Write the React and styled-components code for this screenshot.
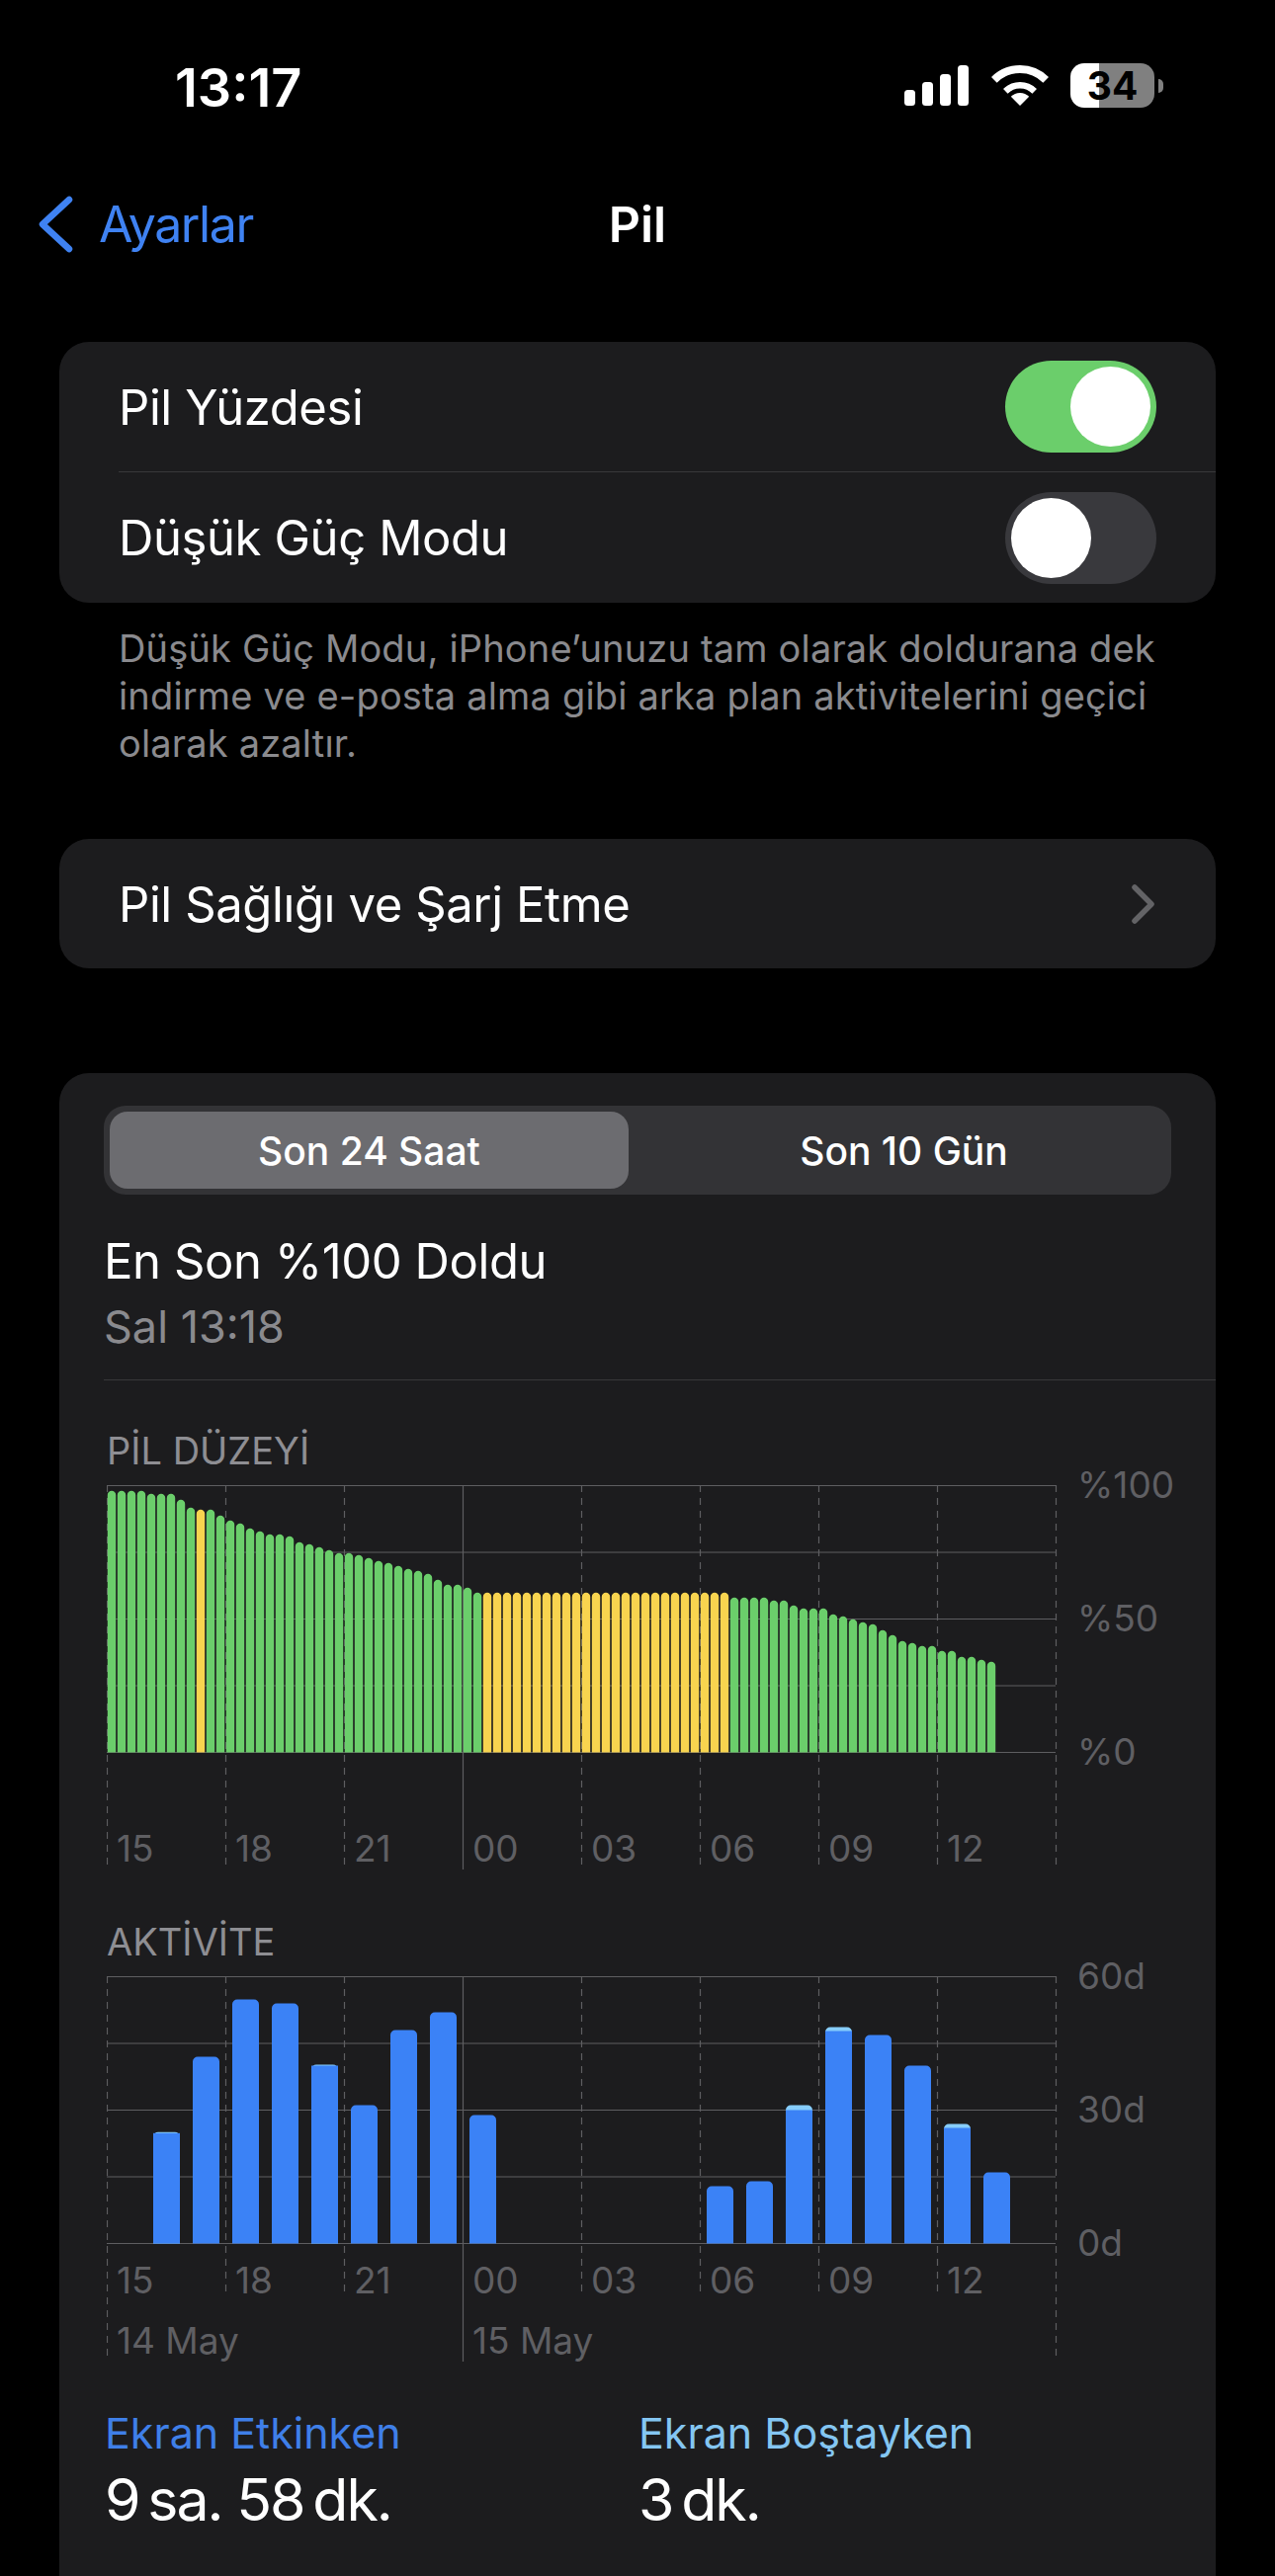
import React from 'react';
import styled, { createGlobalStyle } from 'styled-components';

const GlobalStyle = createGlobalStyle`
  html, body {
    margin: 0;
    padding: 0;
    background: #000;
  }
  body {
    width: 1290px;
    height: 2607px;
    overflow: hidden;
    font-family: Inter, "Liberation Sans", sans-serif;
    color: #fff;
  }
`;

const GRID = '#5e5e61';
const GREEN = '#6bce6b';
const YELLOW = '#f8d44f';
const BLUE = '#3b82f6';
const SKY = '#86cdfb';

// heights in px above the 0 line, one bar every 10px
const levelBars = [
  264.7, 264.7, 264.7, 264.7, 261.7, 261.7, 261.7, 255.7, 247.7, 245.7, 245.7, 239.7, 234.7, 231.7, 226.7, 223.7,
  220.7, 220.7, 218.7, 212.7, 210.7, 207.7, 204.7, 201.7, 201.7, 199.7, 196.7, 193.7, 191.7, 188.7, 185.7, 183.7,
  180.7, 174.7, 169.7, 169.7, 166.7, 161.7, ...Array(25).fill(161.7), 156.7, 156.7, 156.7, 156.7, 153.7, 153.7,
  148.7, 145.7, 145.7, 145.7, 139.7, 137.7, 134.7, 131.7, 129.7, 123.7, 118.7, 112.7, 110.7, 107.7, 107.7, 102.7,
  102.7, 96.7, 96.7, 93.7, 91.7,
];

const isCharging = (i) => i === 9 || (i >= 38 && i <= 62);

// slot is the hour index (24 slots of 40px), idle is the light cap on top
const activityBars = [
  { slot: 1, h: 112.7, idle: 1 },
  { slot: 2, h: 189, idle: 0 },
  { slot: 3, h: 247, idle: 0 },
  { slot: 4, h: 243, idle: 0 },
  { slot: 5, h: 181, idle: 1 },
  { slot: 6, h: 140, idle: 0 },
  { slot: 7, h: 216, idle: 0 },
  { slot: 8, h: 234, idle: 0 },
  { slot: 9, h: 130, idle: 0 },
  { slot: 15, h: 58, idle: 0 },
  { slot: 16, h: 63, idle: 0 },
  { slot: 17, h: 140, idle: 5 },
  { slot: 18, h: 219, idle: 4 },
  { slot: 19, h: 211, idle: 0 },
  { slot: 20, h: 180, idle: 0 },
  { slot: 21, h: 121, idle: 4 },
  { slot: 22, h: 72, idle: 0 },
];

const hours = ['15', '18', '21', '00', '03', '06', '09', '12'];

const topRounded = (x, h, w, r, bottom = 270.5) => {
  const top = bottom - h;
  return `M${x} ${bottom}V${top + r}A${r} ${r} 0 0 1 ${x + r} ${top}H${x + w - r}A${r} ${r} 0 0 1 ${x + w} ${top + r}V${bottom}Z`;
};

function ChartGrid({ dashEnd, edgeEnd, solidEnd }) {
  const dashed = [120, 240, 480, 600, 720, 840];
  return (
    <g stroke={GRID} strokeWidth="1.2" fill="none">
      {[0, 67.5, 135, 202.5, 270].map((y) => (
        <line key={y} x1="0" x2="960" y1={y + 0.5} y2={y + 0.5} />
      ))}
      {dashed.map((x) => (
        <line key={x} x1={x + 0.5} x2={x + 0.5} y1="0" y2={dashEnd} strokeDasharray="7 6" />
      ))}
      {[0, 960].map((x) => (
        <line key={x} x1={x + 0.5} x2={x + 0.5} y1="0" y2={edgeEnd} strokeDasharray="7 6" />
      ))}
      <line x1="360.5" x2="360.5" y1="0" y2={solidEnd} />
    </g>
  );
}

function LevelChart() {
  return (
    <ChartSvg width="962" height="392" viewBox="0 0 962 392">
      <ChartGrid dashEnd={384} edgeEnd={384} solidEnd={389} />
      {levelBars.map((h, i) => (
        <path key={i} d={topRounded(0.8 + 10 * i, h, 8.4, 4.2)} fill={isCharging(i) ? YELLOW : GREEN} />
      ))}
    </ChartSvg>
  );
}

function ActivityChart() {
  return (
    <ChartSvg width="962" height="392" viewBox="0 0 962 392">
      <ChartGrid dashEnd={324} edgeEnd={384} solidEnd={390} />
      {activityBars.map(({ slot, h, idle }) => {
        const x = 7 + 40 * slot;
        return (
          <g key={slot}>
            <path d={topRounded(x, h, 27, 5)} fill={idle ? SKY : BLUE} />
            {idle > 0 && <rect x={x} y={270.5 - h + idle} width="27" height={h - idle} fill={BLUE} />}
          </g>
        );
      })}
    </ChartSvg>
  );
}

function SignalIcon() {
  return (
    <svg width="66" height="41" viewBox="0 0 66 41" fill="#fff">
      <rect x="0" y="25" width="11" height="16" rx="3.5" />
      <rect x="18" y="17" width="11" height="24" rx="3.5" />
      <rect x="36" y="9" width="11" height="32" rx="3.5" />
      <rect x="54" y="0" width="11" height="41" rx="3.5" />
    </svg>
  );
}

function WifiIcon() {
  return (
    <svg width="58" height="41" viewBox="0 0 58 41" fill="none">
      <path d="M29 41L19.8 31.8A13 13 0 0 1 38.2 31.8Z" fill="#fff" />
      <path d="M14.33 26.33A20.75 20.75 0 0 1 43.67 26.33" stroke="#fff" strokeWidth="6.5" />
      <path d="M2.84 14.84A37 37 0 0 1 55.16 14.84" stroke="#fff" strokeWidth="8" />
    </svg>
  );
}

function Chevron({ color, width, height, weight, points }) {
  return (
    <svg width={width} height={height} viewBox={`0 0 ${width} ${height}`} fill="none">
      <polyline points={points} stroke={color} strokeWidth={weight} strokeLinecap="round" strokeLinejoin="round" />
    </svg>
  );
}

export default function App() {
  return (
    <Page>
      <GlobalStyle />
      <StatusBar>
        <Clock>13:17</Clock>
        <StatusIcons>
          <SignalIcon />
          <WifiIcon />
          <Battery>
            <BatteryBody>34</BatteryBody>
            <BatteryCap />
          </Battery>
        </StatusIcons>
      </StatusBar>

      <NavBar>
        <BackLink>
          <Chevron color="#3f82f2" width={36} height={58} weight={6.5} points="32,4 5,29 32,54" />
          <span>Ayarlar</span>
        </BackLink>
        <NavTitle>Pil</NavTitle>
      </NavBar>

      <Content>
        <Card>
          <Row $divided>
            <RowLabel>Pil Yüzdesi</RowLabel>
            <Toggle $on>
              <Knob $on />
            </Toggle>
          </Row>
          <Row>
            <RowLabel>Düşük Güç Modu</RowLabel>
            <Toggle>
              <Knob />
            </Toggle>
          </Row>
        </Card>
        <Footnote>
          Düşük Güç Modu, iPhone’unuzu tam olarak doldurana dek
          <br />
          indirme ve e-posta alma gibi arka plan aktivitelerini geçici
          <br />
          olarak azaltır.
        </Footnote>

        <LinkCard>
          <RowLabel>Pil Sağlığı ve Şarj Etme</RowLabel>
          <Chevron color="#636366" width={26} height={42} weight={5.5} points="4,4 21,21 4,38" />
        </LinkCard>

        <UsageCard>
          <Segmented>
            <Segment $active>Son 24 Saat</Segment>
            <Segment>Son 10 Gün</Segment>
          </Segmented>

          <LastCharge>En Son %100 Doldu</LastCharge>
          <LastChargeTime>Sal 13:18</LastChargeTime>
          <Divider />

          <ChartBlock>
            <ChartTitle>PİL DÜZEYİ</ChartTitle>
            <ChartRow>
              <Plot>
                <LevelChart />
                <HourRow $top={346}>
                  {hours.map((h) => (
                    <AxisText key={h}>{h}</AxisText>
                  ))}
                </HourRow>
              </Plot>
              <YAxis>
                <span>%100</span>
                <span>%50</span>
                <span>%0</span>
              </YAxis>
            </ChartRow>
          </ChartBlock>

          <ChartBlock>
            <ChartTitle>AKTİVİTE</ChartTitle>
            <ChartRow>
              <Plot>
                <ActivityChart />
                <HourRow $top={286}>
                  {hours.map((h) => (
                    <AxisText key={h}>{h}</AxisText>
                  ))}
                </HourRow>
                <DateRow>
                  <AxisText>14 May</AxisText>
                  <AxisText>15 May</AxisText>
                </DateRow>
              </Plot>
              <YAxis>
                <span>60d</span>
                <span>30d</span>
                <span>0d</span>
              </YAxis>
            </ChartRow>
          </ChartBlock>

          <Legend>
            <div>
              <LegendLabel $color="#3f7fe8">Ekran Etkinken</LegendLabel>
              <LegendValue>9{'\u2009'}sa. 58{'\u2009'}dk.</LegendValue>
            </div>
            <div>
              <LegendLabel $color="#84c6f2">Ekran Boştayken</LegendLabel>
              <LegendValue>3{'\u2009'}dk.</LegendValue>
            </div>
          </Legend>
        </UsageCard>
      </Content>
    </Page>
  );
}

const Page = styled.div`
  width: 1290px;
  height: 2607px;
  overflow: hidden;
  background: #000;
`;

const StatusBar = styled.div`
  height: 172px;
  box-sizing: border-box;
  padding: 64px 113px 0 177px;
  display: flex;
  justify-content: space-between;
  align-items: flex-start;
`;
const Clock = styled.div`
  font-size: 54px;
  line-height: 50px;
  font-weight: 600;
`;
const StatusIcons = styled.div`
  display: flex;
  align-items: center;
  gap: 22px;
  height: 45px;
`;
const Battery = styled.div`
  display: flex;
  align-items: center;
  gap: 4px;
`;
const BatteryBody = styled.div`
  width: 85px;
  height: 45px;
  border-radius: 14px;
  background: linear-gradient(to right, #fff 0, #fff 29px, #808080 29px);
  color: #000;
  font-size: 39px;
  line-height: 45px;
  font-weight: 700;
  text-align: center;
`;
const BatteryCap = styled.div`
  width: 5px;
  height: 14px;
  background: #808080;
  border-radius: 0 7px 7px 0;
`;

const NavBar = styled.div`
  height: 110px;
  display: grid;
  grid-template-columns: 1fr auto 1fr;
  align-items: center;
`;
const BackLink = styled.div`
  display: flex;
  align-items: center;
  gap: 26px;
  padding-left: 38px;
  color: #3f82f2;
  font-size: 50px;
  letter-spacing: -1.4px;
`;
const NavTitle = styled.div`
  font-size: 50px;
  font-weight: 600;
`;

const Content = styled.div`
  padding: 64px 60px 0;
`;
const Card = styled.div`
  background: #1c1c1e;
  border-radius: 30px;
`;
const Row = styled.div`
  height: 132px;
  box-sizing: border-box;
  margin-left: 60px;
  padding-right: 60px;
  display: flex;
  align-items: center;
  justify-content: space-between;
  border-bottom: ${(p) => (p.$divided ? '1px solid #38383a' : 'none')};
`;
const RowLabel = styled.div`
  padding-top: 2px;
  font-size: 49px;
  line-height: 60px;
  letter-spacing: -0.4px;
`;
const Toggle = styled.div`
  width: 153px;
  height: 93px;
  padding: 6px;
  box-sizing: border-box;
  border-radius: 47px;
  display: flex;
  justify-content: ${(p) => (p.$on ? 'flex-end' : 'flex-start')};
  background: ${(p) => (p.$on ? '#6bce6b' : '#39393d')};
`;
const Knob = styled.div`
  width: 81px;
  height: 81px;
  border-radius: 50%;
  background: #fff;
`;
const Footnote = styled.p`
  margin: 22px 0 73px 60px;
  font-size: 38px;
  line-height: 48px;
  letter-spacing: 0.17px;
  color: #8a8a8e;
`;
const LinkCard = styled.div`
  height: 131px;
  box-sizing: border-box;
  padding: 0 60px;
  background: #1c1c1e;
  border-radius: 30px;
  display: flex;
  align-items: center;
  justify-content: space-between;
`;

const UsageCard = styled.div`
  margin-top: 106px;
  padding: 33px 0 0 45px;
  height: 1600px;
  box-sizing: border-box;
  background: #1c1c1e;
  border-radius: 30px;
`;
const Segmented = styled.div`
  width: 1080px;
  height: 90px;
  padding: 6px;
  box-sizing: border-box;
  display: flex;
  background: #333336;
  border-radius: 22px;
`;
const Segment = styled.div`
  flex: 0 0 ${(p) => (p.$active ? '525px' : '549px')};
  box-sizing: border-box;
  padding-left: ${(p) => (p.$active ? '0' : '8px')};
  display: flex;
  align-items: center;
  justify-content: center;
  font-size: 39px;
  font-weight: 500;
  border-radius: 18px;
  background: ${(p) => (p.$active ? '#6c6c70' : 'transparent')};
`;
const LastCharge = styled.div`
  margin-top: 38px;
  font-size: 49px;
  line-height: 60px;
  letter-spacing: -0.4px;
`;
const LastChargeTime = styled.div`
  margin-top: 11px;
  font-size: 45px;
  line-height: 50px;
  color: #8a8a8e;
`;
const Divider = styled.div`
  margin-top: 28px;
  height: 1px;
  background: #38383a;
`;

const ChartBlock = styled.div`
  padding: 48px 0 1px 3px;
`;
const ChartTitle = styled.div`
  font-size: 38px;
  line-height: 46px;
  color: #8e8e93;
`;
const ChartRow = styled.div`
  margin-top: 12px;
  display: flex;
`;
const Plot = styled.div`
  position: relative;
  width: 960px;
`;
const ChartSvg = styled.svg`
  position: absolute;
  top: 0;
  left: 0;
`;
const HourRow = styled.div`
  position: relative;
  padding-top: ${(p) => p.$top}px;
  display: grid;
  grid-template-columns: repeat(8, 120px);
`;
const AxisText = styled.div`
  padding-left: 10px;
  font-size: 37px;
  line-height: 44px;
  color: #5f5f63;
`;
const DateRow = styled.div`
  position: relative;
  margin-top: 17px;
  display: grid;
  grid-template-columns: repeat(2, 360px);
`;
const YAxis = styled.div`
  margin: -22px 0 0 22px;
  height: 314px;
  display: flex;
  flex-direction: column;
  justify-content: space-between;
  font-size: 37px;
  line-height: 44px;
  color: #5f5f63;
`;

const Legend = styled.div`
  margin-top: 44px;
  padding-left: 1px;
  display: grid;
  grid-template-columns: 540px auto;
`;
const LegendLabel = styled.div`
  font-size: 43px;
  line-height: 52px;
  color: ${(p) => p.$color};
`;
const LegendValue = styled.div`
  margin-top: 6px;
  font-size: 59px;
  line-height: 72px;
  letter-spacing: -2px;
`;
